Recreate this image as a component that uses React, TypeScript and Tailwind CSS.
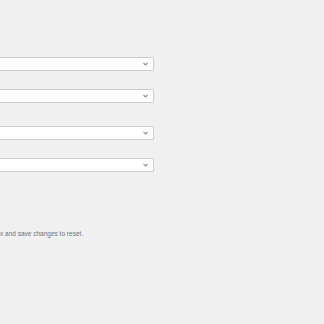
export default function App() {
  const rows = ['mt-[57px]', 'mt-[18px]', 'mt-[23px]', 'mt-[18px]']
  return (
    <div className="w-[324px] h-[324px] bg-[#f0f0f1] overflow-hidden" style={{ fontFamily: '"Liberation Sans", Arial, sans-serif' }}>
      <div className="flex flex-col">
        {rows.map((m, i) => (
          <div key={i} className={`${m} ml-[-10px] w-[164px] h-[14px] bg-white border border-[#cbcccf] rounded-[2px] flex items-center justify-end pr-[5px]`}>
            <svg width="5" height="4" viewBox="0 0 5 4">
              <path d="M0.5 1 L2.5 3 L4.5 1" fill="none" stroke="#8c8f94" strokeWidth="1.1" />
            </svg>
          </div>
        ))}
      </div>
      <p className="mt-[58px] text-[6.5px] leading-[8px] text-[#6e7278]">x and save changes to reset.</p>
    </div>
  )
}
